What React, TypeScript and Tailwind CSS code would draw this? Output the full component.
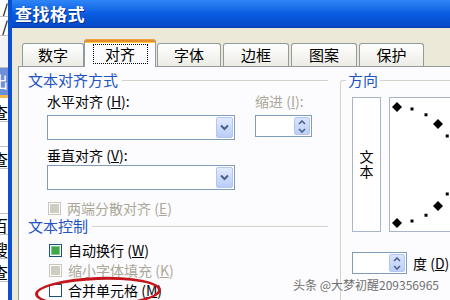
import React from "react";

const F = "font-['Noto_Sans_CJK_SC','Noto_Sans',sans-serif]";

function Combo() {
  return (
    <div className="h-[25px] w-[188px] border border-[#7f9db9] bg-white flex justify-end p-px">
      <div className="w-[17px] h-full bg-linear-to-b from-[#e3ebfe] to-[#b9cdf8] border border-[#b3c6f3] rounded-[2px] flex items-center justify-center">
        <svg width="9" height="7" viewBox="0 0 9 7">
          <path d="M1 1.5 L4.5 5 L8 1.5" stroke="#4d6185" strokeWidth="2" fill="none" />
        </svg>
      </div>
    </div>
  );
}

function Spin({ w }: { w: string }) {
  return (
    <div className={`h-[22px] ${w} border border-[#7f9db9] bg-white flex justify-end p-px`}>
      <div className="w-[16px] h-full bg-linear-to-b from-[#d9e4fd] to-[#bccff9] border border-[#b3c6f3] rounded-[2px] flex flex-col items-center justify-center gap-[3px]">
        <svg width="8" height="5" viewBox="0 0 8 5">
          <path d="M1 4 L4 1 L7 4" stroke="#4d6185" strokeWidth="1.6" fill="none" />
        </svg>
        <svg width="8" height="5" viewBox="0 0 8 5">
          <path d="M1 1 L4 4 L7 1" stroke="#4d6185" strokeWidth="1.6" fill="none" />
        </svg>
      </div>
    </div>
  );
}

function Check({ kind }: { kind: "green" | "disabled" | "empty" }) {
  if (kind === "green")
    return (
      <div className="w-[13px] h-[13px] border border-[#1c5180] bg-white flex items-center justify-center">
        <div className="w-[9px] h-[9px] bg-[#3ea54a] border border-[#7fcf82]" />
      </div>
    );
  if (kind === "disabled")
    return (
      <div className="w-[13px] h-[13px] border border-[#cac8bb] bg-white flex items-center justify-center">
        <div className="w-[9px] h-[9px] bg-[#cfcdc2]" />
      </div>
    );
  return <div className="w-[13px] h-[13px] border border-[#1c5180] bg-white" />;
}

function GroupLabel({ text }: { text: string }) {
  return (
    <div className="flex items-center h-[16px] pl-[9px] pr-[7px] gap-[4px]">
      <span className="text-[15px] leading-[16px] text-[#2152c4] whitespace-nowrap">{text}</span>
      <div className="flex-1 h-px bg-[#d5d3c8]" />
    </div>
  );
}

function Dial() {
  const cx = 7;
  const cy = 67;
  const r = 58;
  const items = [];
  for (let a = 90; a >= -90; a -= 15) {
    const rad = (a * Math.PI) / 180;
    const x = cx + r * Math.cos(rad);
    const y = cy - r * Math.sin(rad);
    if (a % 45 === 0) {
      items.push(
        <path key={a} d={`M${x} ${y - 5} L${x + 5} ${y} L${x} ${y + 5} L${x - 5} ${y} Z`} fill="#000" />
      );
    } else {
      items.push(<rect key={a} x={x - 1.5} y={y - 1.5} width="3" height="3" fill="#000" />);
    }
  }
  return (
    <svg width="80" height="133" viewBox="0 0 80 133">
      {items}
    </svg>
  );
}

function ExcelStrip() {
  const cell = "flex justify-end overflow-hidden whitespace-nowrap border-b border-[#c0c0c0] text-[16px] leading-[18px] text-black";
  return (
    <div className={`w-[8px] h-[300px] bg-white flex flex-col overflow-hidden ${F}`}>
      <div className={`${cell} h-[17px]`}>/</div>
      <div className={`${cell} h-[19px]`}>/</div>
      <div className="h-[32px] bg-[#f4f4f4] border-b border-[#c0c0c0]" />
      <div className="h-[27px] bg-[#6d8fd9] flex justify-end overflow-hidden text-white text-[16px] leading-[27px]">出</div>
      <div className="h-[3px] bg-[#f2b84a]" />
      <div className={`${cell} h-[24px] items-end`}>查</div>
      <div className="h-[25px] border-b border-[#c0c0c0]" />
      <div className={`${cell} h-[22px] items-end`}>查</div>
      <div className="h-[45px] border-b border-[#c0c0c0]" />
      <div className={`${cell} h-[21px] items-end`}>百</div>
      <div className={`${cell} h-[24px] items-end`}>搜</div>
      <div className={`${cell} h-[23px] items-end`}>查</div>
    </div>
  );
}

export default function App() {
  return (
    <div className={`relative w-[450px] h-[300px] overflow-hidden flex bg-white ${F}`}>
      <ExcelStrip />
      <div className="flex-1 flex flex-col border-l-[4px] border-[#0a4fd0] min-w-0">
        {/* title bar */}
        <div className="h-[28px] bg-linear-to-b from-[#2f86f6] via-[#0b5ce2] to-[#0549c8] flex items-center pl-[3px] border-b border-[#0a3fae]">
          <span className="text-white font-bold text-[17px] leading-[20px] tracking-[0.5px] [text-shadow:1px_1px_0_#0a2f8a]">查找格式</span>
        </div>
        {/* body */}
        <div className="flex-1 bg-[#ece9d8] pt-[11px] pl-[6px] flex flex-col">
          {/* tabs */}
          <div className="h-[27px] flex items-end pl-[4px] text-[15px] text-black">
            <div className="w-[62px] h-[23px] border border-b-0 border-[#919b9c] rounded-t-[3px] bg-linear-to-b from-white to-[#ecebe5] flex items-center justify-center">数字</div>
            <div className="relative z-10 w-[72px] h-[28px] -mb-px border-x border-[#919b9c] bg-[#fcfcfe] flex flex-col rounded-t-[3px] overflow-hidden">
              <div className="h-[3px] bg-[#e68b2c] border-t border-[#f0a040]" />
              <div className="h-px bg-[#ffc73c]" />
              <div className="flex-1 flex items-start justify-center pt-[1px]">
                <div className="w-[55px] h-[20px] border border-dotted border-black flex items-center justify-center leading-[18px]">对齐</div>
              </div>
            </div>
            <div className="ml-[1px] w-[64px] h-[23px] border border-b-0 border-[#919b9c] rounded-t-[3px] bg-linear-to-b from-white to-[#ecebe5] flex items-center justify-center">字体</div>
            <div className="ml-[2px] w-[66px] h-[23px] border border-b-0 border-[#919b9c] rounded-t-[3px] bg-linear-to-b from-white to-[#ecebe5] flex items-center justify-center">边框</div>
            <div className="ml-[2px] w-[66px] h-[23px] border border-b-0 border-[#919b9c] rounded-t-[3px] bg-linear-to-b from-white to-[#ecebe5] flex items-center justify-center">图案</div>
            <div className="ml-[2px] w-[65px] h-[23px] border border-b-0 border-[#919b9c] rounded-t-[3px] bg-linear-to-b from-white to-[#ecebe5] flex items-center justify-center">保护</div>
          </div>
          {/* panel */}
          <div className="flex-1 bg-[#fcfcfe] border-t border-l border-[#919b9c] flex pt-[5px] text-[14px] text-black">
            {/* left column */}
            <div className="w-[316px] flex flex-col">
              <GroupLabel text="文本对齐方式" />
              <div className="flex pl-[28px] mt-[4px]">
                <div className="w-[188px] flex flex-col">
                  <div className="h-[18px] leading-[18px] whitespace-nowrap">水平对齐 (<span className="underline">H</span>):</div>
                  <div className="mt-[5px]"><Combo /></div>
                  <div className="mt-[6px] h-[18px] leading-[18px] whitespace-nowrap">垂直对齐 (<span className="underline">V</span>):</div>
                  <div className="mt-[1px]"><Combo /></div>
                  <div className="mt-[10px] h-[16px] flex items-center gap-[6px] pl-[1px] text-[#aca899] whitespace-nowrap">
                    <Check kind="disabled" />
                    <span>两端分散对齐 (<span className="underline">E</span>)</span>
                  </div>
                </div>
                <div className="ml-[20px] flex flex-col">
                  <div className="h-[18px] leading-[18px] whitespace-nowrap text-[#aca899]">缩进 (<span className="underline">I</span>):</div>
                  <div className="mt-[5px]"><Spin w="w-[57px]" /></div>
                </div>
              </div>
              <div className="mt-[2px]">
                <GroupLabel text="文本控制" />
              </div>
              <div className="flex flex-col pl-[30px] mt-[8px] gap-[4px]">
                <div className="h-[16px] flex items-center gap-[6px] whitespace-nowrap">
                  <Check kind="green" />
                  <span>自动换行 (<span className="underline">W</span>)</span>
                </div>
                <div className="h-[16px] flex items-center gap-[6px] whitespace-nowrap text-[#aca899]">
                  <Check kind="disabled" />
                  <span>缩小字体填充 (<span className="underline">K</span>)</span>
                </div>
                <div className="h-[16px] flex items-center gap-[6px] whitespace-nowrap">
                  <Check kind="empty" />
                  <span>合并单元格 (<span className="underline">M</span>)</span>
                </div>
              </div>
            </div>
            {/* right column */}
            <div className="flex-1 flex flex-col pl-[5px] min-w-0">
              <div className="h-[16px] flex items-center">
                <div className="w-[6px] h-[8px] mt-[8px] border-l border-t border-[#d5d3c8] rounded-tl-[3px]" />
                <span className="px-[2px] text-[15px] leading-[16px] text-[#2152c4] whitespace-nowrap">方向</span>
                <div className="flex-1 h-px bg-[#d5d3c8]" />
              </div>
              <div className="flex-1 border-l border-[#d5d3c8] pl-[11px] pt-[9px] flex flex-col">
                <div className="flex h-[135px] gap-[8px]">
                  <div className="w-[29px] h-full border border-[#a8b5c7] bg-white flex flex-col items-center justify-center text-[14px] leading-[15px] pb-[2px]">
                    <span>文</span>
                    <span>本</span>
                  </div>
                  <div className="flex-1 h-full border border-[#a8b5c7] border-r-0 bg-white overflow-hidden">
                    <Dial />
                  </div>
                </div>
                <div className="mt-[20px] flex items-center gap-[6px] whitespace-nowrap">
                  <Spin w="w-[55px]" />
                  <span>度 (<span className="underline">D</span>)</span>
                </div>
              </div>
            </div>
          </div>
        </div>
      </div>
      {/* annotations */}
      <div className="absolute left-[90px] top-[41px] w-[60px] h-[26px] rounded-[50%] border-[3px] border-[#c4161c] -rotate-3" />
      <div className="absolute left-[35px] top-[277px] w-[126px] h-[30px] rounded-[50%] border-[3px] border-[#c4161c] -rotate-2" />
      <div className="absolute left-[293px] top-[278px] text-[12px] leading-[14px] text-[#6e6e6e] whitespace-nowrap [text-shadow:0_0_2px_#fff,0_0_2px_#fff]">头条 @大梦初醒209356965</div>
    </div>
  );
}
